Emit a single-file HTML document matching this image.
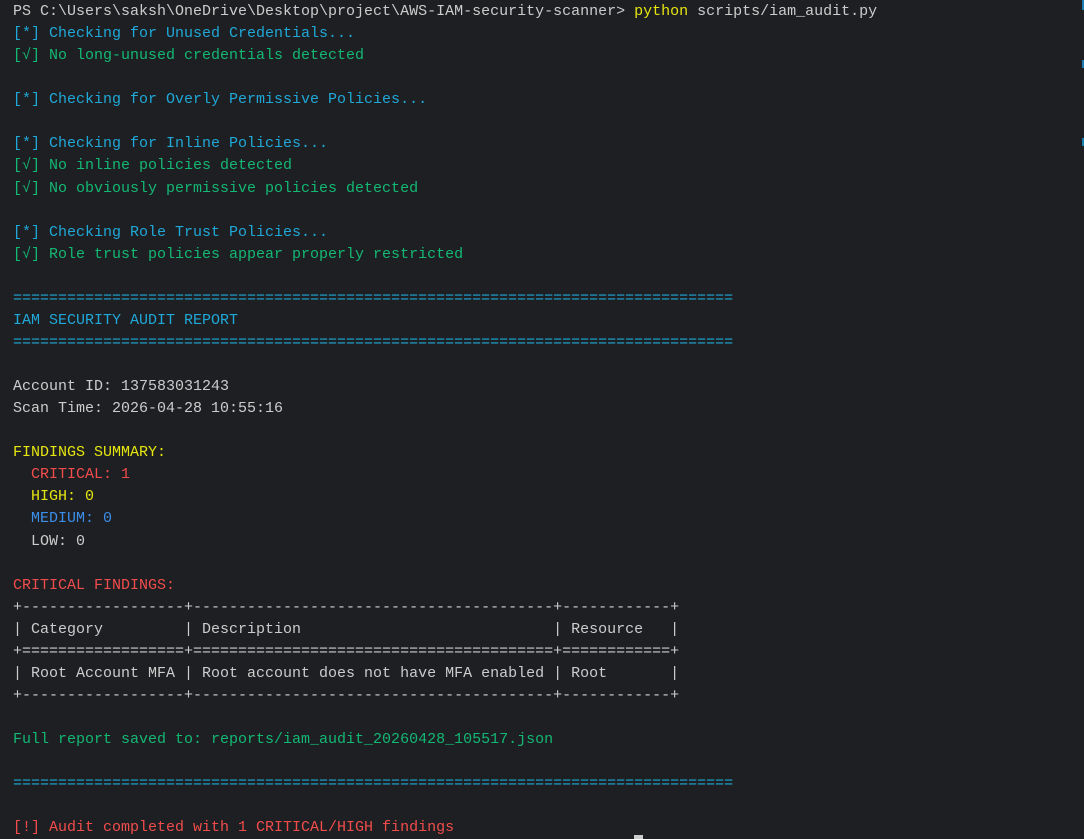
<!DOCTYPE html>
<html><head><meta charset="utf-8"><style>
html,body{margin:0;padding:0;background:#1e1f22;width:1084px;height:839px;overflow:hidden}
pre{margin:0;padding:1px 0 0 13px;font-family:"Liberation Mono",monospace;font-size:15px;line-height:22.06px;color:#cccccc;white-space:pre}
.c{color:#1fa8d8}.g{color:#13b874}.y{color:#e5e510}.r{color:#f14c4c}.b{color:#3b8eea}
.sb{position:absolute;right:0;width:2px;background:#1a7cb0}
.cur{position:absolute;left:634px;top:835px;width:9px;height:4px;background:#ccc}
</style></head><body>
<pre>PS C:\Users\saksh\OneDrive\Desktop\project\AWS-IAM-security-scanner&gt; <span class="y">python</span> scripts/iam_audit.py
<span class="c">[*] Checking for Unused Credentials...</span>
<span class="g">[√] No long-unused credentials detected</span>

<span class="c">[*] Checking for Overly Permissive Policies...</span>

<span class="c">[*] Checking for Inline Policies...</span>
<span class="g">[√] No inline policies detected</span>
<span class="g">[√] No obviously permissive policies detected</span>

<span class="c">[*] Checking Role Trust Policies...</span>
<span class="g">[√] Role trust policies appear properly restricted</span>

<span class="c">================================================================================</span>
<span class="c">IAM SECURITY AUDIT REPORT</span>
<span class="c">================================================================================</span>

Account ID: 137583031243
Scan Time: 2026-04-28 10:55:16

<span class="y">FINDINGS SUMMARY:</span>
  <span class="r">CRITICAL: 1</span>
  <span class="y">HIGH: 0</span>
  <span class="b">MEDIUM: 0</span>
  LOW: 0

<span class="r">CRITICAL FINDINGS:</span>
+------------------+----------------------------------------+------------+
| Category         | Description                            | Resource   |
+==================+========================================+============+
| Root Account MFA | Root account does not have MFA enabled | Root       |
+------------------+----------------------------------------+------------+

<span class="g">Full report saved to: reports/iam_audit_20260428_105517.json</span>

<span class="c">================================================================================</span>

<span class="r">[!] Audit completed with 1 CRITICAL/HIGH findings</span></pre>
<div class="sb" style="top:0;height:10px"></div>
<div class="sb" style="top:60px;height:8px"></div>
<div class="sb" style="top:138px;height:8px"></div>
<div class="cur"></div>
</body></html>
